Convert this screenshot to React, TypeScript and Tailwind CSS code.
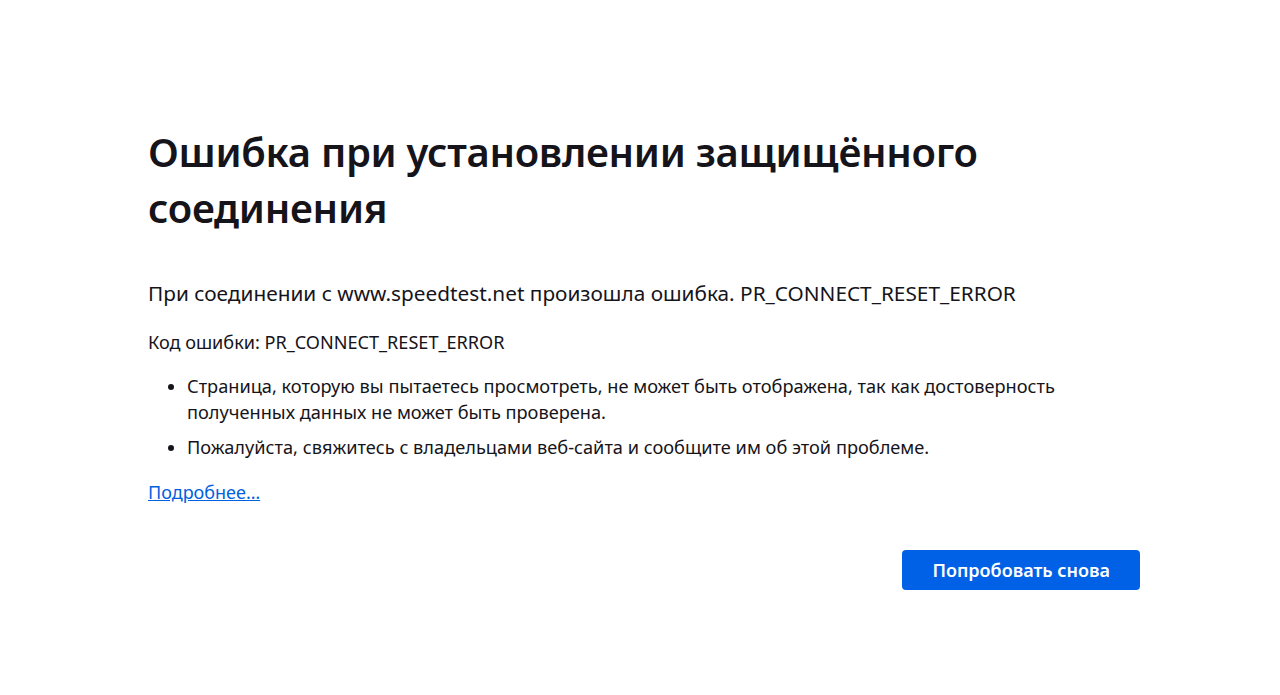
import React from "react";

const App: React.FC = () => {
  return (
    <div
      className="w-[1280px] h-[695px] bg-white text-[#15141a] overflow-hidden"
      style={{ fontFamily: '"Noto Sans", "Open Sans", sans-serif' }}
    >
      <div className="ml-[148px] w-[992px] pt-[124px]">
        <h1 className="text-[40px] leading-[56px] font-semibold tracking-[-0.3px]">
          Ошибка при установлении защищённого
          <br />
          соединения
        </h1>

        <p className="mt-[42px] text-[20.8px] leading-[30px]">
          При соединении с www.speedtest.net произошла ошибка. PR_CONNECT_RESET_ERROR
        </p>

        <p className="mt-[22px] text-[18.1px] leading-[24px]">
          Код ошибки: PR_CONNECT_RESET_ERROR
        </p>

        <ul className="mt-[19px] pl-[39px] list-disc text-[18.2px] leading-[26px]">
          <li>
            Страница, которую вы пытаетесь просмотреть, не может быть отображена, так как достоверность
            <br />
            полученных данных не может быть проверена.
          </li>
          <li className="mt-[9px]">
            Пожалуйста, свяжитесь с владельцами веб-сайта и сообщите им об этой проблеме.
          </li>
        </ul>

        <a href="#" className="block w-fit mt-[20px] text-[18px] leading-[24px] text-[#0061e0] underline">
          Подробнее…
        </a>

        <div className="flex justify-end mt-[46px]">
          <button className="h-[40px] px-[30px] rounded-[4px] bg-[#0061e6] text-white text-[18px] font-semibold">
            Попробовать снова
          </button>
        </div>
      </div>
    </div>
  );
};

export default App;
